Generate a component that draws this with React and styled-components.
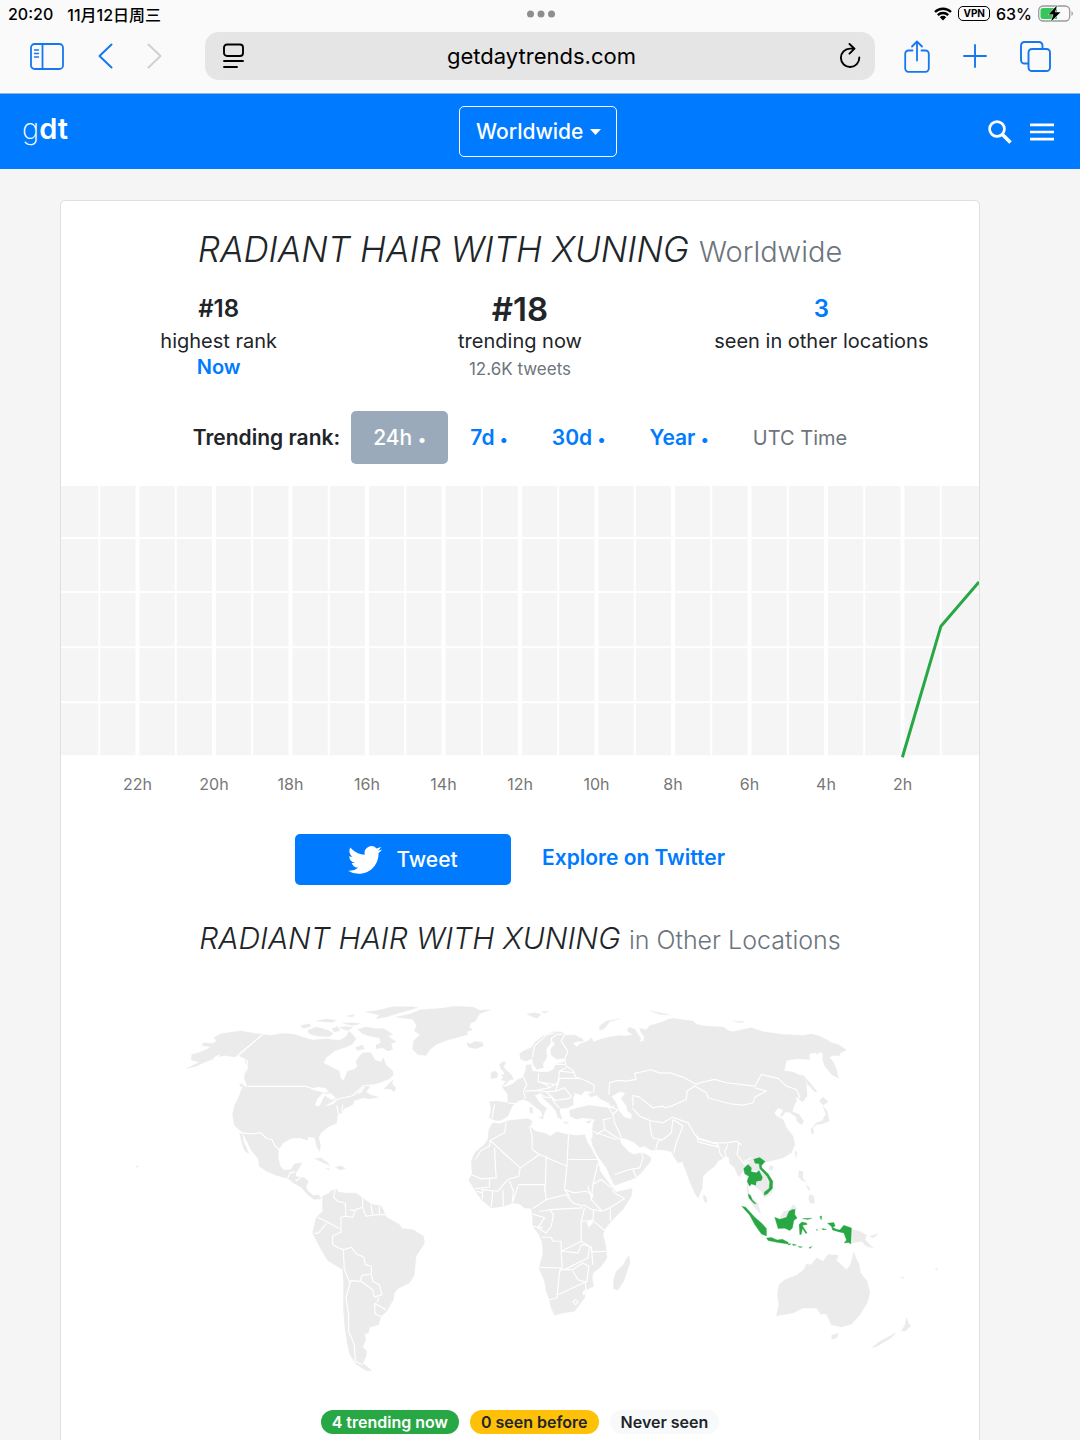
import React, { useState } from "react";
import styled, { createGlobalStyle } from "styled-components";

const Global = createGlobalStyle`
  *, *::before, *::after { box-sizing: border-box; }
  body {
    margin: 0;
    background: #f5f5f5;
    color: #212529;
    font-family: Inter, "Noto Sans CJK SC", sans-serif;
    font-size: 21px;
  }
  button, input, select { font: inherit; color: inherit; margin: 0; }
  h1, h2, p { margin: 0; font-weight: 400; }
  a { color: #007bff; text-decoration: none; }
`;

const Page = styled.div`
  height: 100vh;
  overflow: hidden;
  display: flex;
  flex-direction: column;
`;

/* ---------- Browser chrome ---------- */

const Chrome = styled.div`
  flex: none;
  background: #fafafa;
  border-bottom: 1px solid #8fb4dd;
  color: #000;
`;

const StatusBar = styled.div`
  display: grid;
  grid-template-columns: 1fr auto 1fr;
  align-items: center;
  height: 27px;
  padding: 0 6px 0 8px;
  font-size: 16px;
  font-weight: 500;
`;

const StatusSide = styled.div`
  display: flex;
  align-items: center;
  justify-content: ${(p) => (p.$end ? "flex-end" : "flex-start")};
  gap: ${(p) => (p.$end ? 6 : 14)}px;
`;

const Vpn = styled.span`
  border: 1px solid #000;
  border-radius: 5px;
  padding: 0 4px;
  font-size: 10px;
  line-height: 13px;
  font-weight: 700;
`;

const Toolbar = styled.div`
  display: grid;
  grid-template-columns: 175px 1fr 175px;
  align-items: center;
  gap: 15px;
  height: 66px;
  padding: 5px 15px 13px;
`;

const ToolGroup = styled.div`
  display: flex;
  align-items: center;
  justify-content: space-between;
  padding: ${(p) => (p.$end ? "0 14px" : "0 28px 0 15px")};
`;

const IconButton = styled.button`
  display: grid;
  place-items: center;
  padding: 0;
  border: 0;
  background: none;
  color: ${(p) => p.$color || "#1677f0"};
`;

const Address = styled.label`
  display: flex;
  align-items: center;
  height: 48px;
  padding: 0 14px 0 18px;
  border-radius: 14px;
  background: #e5e5e5;
`;

const AddressInput = styled.input`
  flex: 1;
  min-width: 0;
  border: 0;
  background: none;
  text-align: center;
  font-size: 22px;
  outline: none;
`;

/* ---------- Site header ---------- */

const SiteHeader = styled.header`
  flex: none;
  display: grid;
  grid-template-columns: 1fr auto 1fr;
  align-items: center;
  height: 75px;
  padding: 0 26px 0 22px;
  background: #007bff;
  color: #fff;
`;

const Logo = styled.a`
  color: #fff;
  font-size: 29px;
  line-height: 32px;
  font-weight: 600;
  padding-bottom: 6px;
`;

const LogoThin = styled.span`
  font-weight: 200;
`;

const Place = styled.label`
  display: grid;
  align-items: center;
  height: 51px;
  border: 1px solid #fff;
  border-radius: 5px;
  & > * { grid-area: 1 / 1; }
  & > svg { justify-self: end; margin-right: 15px; pointer-events: none; }
`;

const PlaceSelect = styled.select`
  appearance: none;
  height: 100%;
  border: 0;
  padding: 0 32px 0 16px;
  background: none;
  color: #fff;
  font-size: 21px;
  font-weight: 500;
`;

const HeaderTools = styled.div`
  display: flex;
  justify-content: flex-end;
  align-items: center;
  gap: 18px;
`;

/* ---------- Trend card ---------- */

const Main = styled.main`
  padding: 31px 100px 0 60px;
`;

const Card = styled.section`
  background: #fff;
  border: 1px solid #dfdfdf;
  border-radius: 5px;
  padding: 24px 0 40px;
`;

const Title = styled.h1`
  text-align: center;
  font-size: 35px;
  line-height: 48px;
  font-weight: 300;
`;

const SubTitle = styled.h2`
  text-align: center;
  font-size: 30px;
  line-height: 40px;
  font-weight: 300;
  margin-top: 33px;
`;

const Muted = styled.span`
  color: #6c757d;
  font-size: ${(p) => p.$size}px;
  font-weight: 300;
`;

const Stats = styled.div`
  display: grid;
  grid-template-columns: repeat(3, 1fr);
  padding: 15px 7px 0;
  text-align: center;
`;

const StatValue = styled.p`
  font-size: ${(p) => (p.$big ? 33 : 24)}px;
  line-height: 36px;
  font-weight: 600;
`;

const StatLabel = styled.p`
  font-size: 20px;
  line-height: 28px;
`;

const StatNote = styled.p`
  font-size: ${(p) => (p.$small ? 17 : 20)}px;
  line-height: ${(p) => (p.$small ? 28 : 24)}px;
  font-weight: ${(p) => (p.$small ? 400 : 600)};
  color: #6c757d;
`;

const RangeRow = styled.div`
  display: flex;
  justify-content: center;
  align-items: center;
  margin: 28px 0 22px;
  height: 53px;
`;

const RangeLabel = styled.span`
  font-weight: 600;
  margin-right: 11px;
`;

const RangeButton = styled.button`
  height: 53px;
  padding: 0 22px;
  border: 0;
  border-radius: 5px;
  font-weight: ${(p) => (p.$active ? 500 : 600)};
  background: ${(p) => (p.$active ? "#9aaaba" : "transparent")};
  color: ${(p) => (p.$active ? "#fff" : "#007bff")};
`;

const Dot = styled.span`
  font-size: 16px;
`;

const Zone = styled.span`
  padding-left: 22px;
  font-size: 20px;
  color: #6c757d;
`;

const Plot = styled.svg`
  display: block;
  width: 100%;
  height: auto;
`;

const Hours = styled.div`
  display: grid;
  grid-template-columns: repeat(24, 1fr);
  margin-top: 14px;
  font-size: 16px;
  line-height: 24px;
  color: #777;
  text-align: center;
`;

const Hour = styled.span`
  grid-column: ${(p) => p.$col} / span 2;
`;

const Actions = styled.div`
  display: flex;
  justify-content: center;
  margin-top: 38px;
`;

const TweetButton = styled.button`
  display: flex;
  align-items: center;
  justify-content: center;
  gap: 14px;
  width: 216px;
  height: 51px;
  border: 0;
  border-radius: 5px;
  background: #007bff;
  color: #fff;
  font-weight: 500;
`;

const ExploreLink = styled.a`
  padding: 0 20px 0 31px;
  line-height: 47px;
  font-weight: 600;
`;

const Legend = styled.div`
  display: flex;
  justify-content: center;
  gap: 11px;
  margin-top: 24px;
`;

const Badge = styled.span`
  padding: 0 11px;
  border-radius: 12px;
  font-size: 16px;
  line-height: 24px;
  font-weight: 600;
  background: ${(p) => p.$bg};
  color: ${(p) => p.$fg || "#212529"};
`;

/* ---------- Icons ---------- */

const line = { fill: "none", stroke: "currentColor", strokeLinecap: "round", strokeLinejoin: "round" };

const SidebarIcon = () => (
  <svg width="34" height="27" viewBox="0 0 34 27" {...line} strokeWidth="1.8">
    <rect x="1" y="1" width="32" height="25" rx="3.5" />
    <path d="M12.5 1v25" />
    <path d="M4.5 7h4M4.5 10.5h4M4.5 14h4" strokeWidth="1.3" />
  </svg>
);
const Chevron = ({ right }) => (
  <svg width="15" height="26" viewBox="0 0 15 26" {...line} strokeWidth="2">
    <path d={right ? "M1.5 1.5L13.5 13L1.5 24.5" : "M13.5 1.5L1.5 13L13.5 24.5"} />
  </svg>
);
const ReaderIcon = () => (
  <svg width="21" height="26" viewBox="0 0 21 26" {...line} strokeWidth="1.9">
    <rect x="1" y="1.5" width="19" height="11.5" rx="3" />
    <path d="M1 18h19M1 24h13" />
  </svg>
);
const ReloadIcon = () => (
  <svg width="22" height="26" viewBox="0 0 22 26" {...line} strokeWidth="1.9">
    <path d="M20.3 14.5A9.2 9.2 0 1 1 11 5.6L15 5.6M10.500 1L15.500 5.700L10.500 10.700" />
  </svg>
);
const ShareIcon = () => (
  <svg width="26" height="33" viewBox="0 0 26 33" {...line} strokeWidth="1.8">
    <path d="M8.5 10.5H4.5A3.3 3.3 0 0 0 1.2 13.8V28.5A3.3 3.3 0 0 0 4.5 31.8H21.5A3.3 3.3 0 0 0 24.8 28.5V13.8A3.3 3.3 0 0 0 21.5 10.5H17.5M13 20.5V1.5M8 6.5L13 1.5L18 6.5" />
  </svg>
);
const PlusIcon = () => (
  <svg width="24" height="24" viewBox="0 0 24 24" {...line} strokeWidth="1.9">
    <path d="M12 1v22M1 12h22" />
  </svg>
);
const TabsIcon = () => (
  <svg width="31" height="31" viewBox="0 0 31 31" {...line} strokeWidth="1.9">
    <rect x="8.5" y="8" width="21.5" height="22" rx="3.5" />
    <path d="M8 22.5H4.5A3.5 3.5 0 0 1 1 19V4.5A3.5 3.5 0 0 1 4.5 1H19A3.5 3.5 0 0 1 22.5 4.5V7.5" />
  </svg>
);
const DotsIcon = () => (
  <svg width="28" height="8" viewBox="0 0 28 8" fill="#8e8e8e">
    <circle cx="3.5" cy="4" r="3.5" /><circle cx="14" cy="4" r="3.5" /><circle cx="24.5" cy="4" r="3.5" />
  </svg>
);
const WifiIcon = () => (
  <svg width="18" height="14" viewBox="0 0 18 14" {...line} strokeWidth="2.4" strokeLinecap="butt">
    <path d="M1 5A11.3 11.3 0 0 1 17 5M3.8 8.1A7.4 7.4 0 0 1 14.2 8.1" />
    <path d="M9 13.5L5.8 10.2A4.5 4.5 0 0 1 12.2 10.2Z" fill="currentColor" stroke="none" />
  </svg>
);
const BatteryIcon = () => (
  <svg width="36" height="17" viewBox="0 0 36 17">
    <rect x="0.7" y="1" width="31" height="15" rx="4.5" fill="none" stroke="#9a9a9a" strokeWidth="1.3" />
    <path d="M5 3H19V14H5A2.5 2.5 0 0 1 2.5 11.5V5.5A2.5 2.5 0 0 1 5 3Z" fill="#35c759" />
    <path d="M33.5 6V11A3 3 0 0 0 33.5 6Z" fill="#9a9a9a" />
    <path d="M19 0.5L10.5 9.5H15.5L13 16.5L22.5 7.2H17Z" fill="#000" stroke="#fafafa" strokeWidth="1" paintOrder="stroke" />
  </svg>
);
const SearchIcon = () => (
  <svg width="24" height="24" viewBox="0 0 24 24" fill="none" stroke="currentColor">
    <circle cx="9" cy="9" r="7.4" strokeWidth="2.7" />
    <path d="M14.2 14.2L22.5 22.5" strokeWidth="3.6" />
  </svg>
);
const MenuIcon = () => (
  <svg width="24" height="18" viewBox="0 0 24 18" stroke="currentColor" strokeWidth="2.7">
    <path d="M0 1.8H24M0 9H24M0 16.2H24" />
  </svg>
);
const Caret = () => (
  <svg width="11" height="6" viewBox="0 0 11 6" fill="#fff"><path d="M0 0H11L5.5 6Z" /></svg>
);
const Bird = () => (
  <svg width="34" height="34" viewBox="0 0 24 24" fill="currentColor">
    <path d="M23.953 4.570a10 10 0 0 1-2.825.775 4.958 4.958 0 0 0 2.163-2.723c-.951.555-2.005.959-3.127 1.184a4.920 4.920 0 0 0-8.384 4.482C7.690 8.095 4.067 6.130 1.640 3.162a4.822 4.822 0 0 0-.666 2.475c0 1.710.870 3.213 2.188 4.096a4.904 4.904 0 0 1-2.228-.616v.060a4.923 4.923 0 0 0 3.946 4.827 4.996 4.996 0 0 1-2.212.085 4.936 4.936 0 0 0 4.604 3.417 9.867 9.867 0 0 1-6.102 2.105c-.390 0-.779-.023-1.170-.067a13.995 13.995 0 0 0 7.557 2.209c9.053 0 13.998-7.496 13.998-13.985 0-.210 0-.420-.015-.630A9.935 9.935 0 0 0 24 4.590z" />
  </svg>
);

/* ---------- Rank chart ---------- */

const step = 917 / 24;

const RankChart = () => (
  <Plot viewBox="0 0 917 272" role="img" aria-label="Trending rank, last 24 hours">
    <rect width="917" height="269" fill="#f5f5f5" />
    {Array.from({ length: 23 }, (_, i) => (
      <path key={i} d={`M${(i + 1) * step} 0V269`} stroke="#fff" strokeWidth={i % 2 ? 4 : 2} />
    ))}
    {[52, 106, 161, 216].map((y) => (
      <path key={y} d={`M0 ${y}H917`} stroke="#fff" strokeWidth="2" />
    ))}
    <path d="M840.5 271L879 140L917 96" fill="none" stroke="#28a745" strokeWidth="3" />
  </Plot>
);

/* ---------- World map ---------- */

const Land = styled.g`
  fill: #ebebeb;
  stroke: #ebebeb;
  stroke-width: 1;
  stroke-linejoin: round;
`;
const Borders = styled.path`
  fill: none;
  stroke: #fff;
  stroke-width: 3.5;
`;
const Water = styled.path`
  fill: #fff;
  stroke: #fff;
`;
const Active = styled.path`
  fill: #28a745;
  stroke: #28a745;
`;

const NorthAmerica = () => (
  <Land transform="translate(118 6) scale(.33333)">
    <path d="M22 232L45 221L60 213L36 207L38 190L62 184L84 174L95 167L68 163L74 155L100 157L112 150L104 140L125 128L160 123L185 120L215 125L250 130L175 193L165 198L140 193L118 196L128 188L110 194L100 205L80 212L50 226Z" />
    <path d="M253 130L275 133L300 128L325 127L350 131L375 140L400 147L440 143L480 148L500 137L510 120L520 130L530 142L520 158L500 168L465 180L440 200L433 216L455 228L480 240L484 262L493 268L505 240L525 235L535 225L530 212L537 200L550 185L575 185L586 206L605 213L612 200L620 222L640 240L642 250L632 262L600 275L575 282L552 287L530 310L545 305L560 285L572 288L560 303L575 312L597 318L570 324L555 320L525 328L520 341L495 352L488 365L475 370L472 396L450 405L425 425L418 440L424 465L420 480L412 465L407 440L385 437L385 447L360 440L335 442L312 455L298 475L297 500L303 525L315 537L335 535L345 518L368 515L360 530L350 545L350 556L375 560L388 570L380 585L385 598L400 612L418 612L427 622L405 625L385 610L368 590L345 575L325 562L290 552L262 540L240 525L237 503L215 475L200 445L190 425L165 402L160 370L165 345L180 315L188 292L205 287L195 262L198 240L208 232L195 205L178 195Z" />
    <path d="M181 424L190 430L193 450L205 478L208 488L196 478L188 455Z" />
    <path d="M650 78L690 70L722 56L790 52L820 46L880 48L900 58L932 56L900 68L888 90L875 95L868 108L880 116L862 122L865 130L830 140L800 148L770 160L750 177L740 193L715 190L700 175L702 150L722 130L705 120L712 104L700 85Z" />
    <path d="M863 155L875 159L885 152L908 154L910 164L890 172L868 168Z" />
    <path d="M560 63L600 57L640 47L700 47L715 50L680 60L655 67L620 78L590 83L600 72Z" />
    <path d="M365 103L390 98L395 106L370 112ZM385 118L410 108L430 112L450 120L462 127L450 137L415 135L390 128ZM412 90L440 84L470 88L460 94L430 92ZM458 113L475 106L482 118L465 123ZM490 97L520 95L545 98L520 103ZM502 75L525 70L520 78ZM480 110L500 106L520 109L505 118Z" />
    <path d="M535 115L560 108L590 113L612 112L628 122L640 130L625 135L650 152L635 158L640 175L625 180L610 170L590 173L590 162L605 155L600 140L570 135L550 128ZM528 170L550 162L555 174L535 178Z" />
    <path d="M613 293L632 275L642 266L638 278L650 290L645 302L632 294ZM185 277L200 288L195 292L180 282Z" />
    <path d="M408 503L425 500L445 514L450 522L430 514ZM468 528L485 524L498 532L484 537ZM440 532L452 533L448 536Z" />
    <Borders d="M205 286H380L400 292L430 300L445 318L470 325L520 314L552 284L580 281M250 130L175 194L205 210L200 245M180 424L215 428L245 425L262 442L278 445L288 465L300 475M325 562L332 545L347 543M349 570L365 558M472 343L478 368M490 340L488 362" />
    <Water d="M395 294L415 288L440 292L448 304L425 302ZM408 342L415 322L430 307L437 312L428 328L420 345ZM436 310L455 307L468 320L456 326L448 319ZM438 345L460 331L474 327L462 338Z" />
  </Land>
);

const SouthAmerica = () => (
  <Land transform="translate(118 196) scale(.33333)">
    <path d="M430 45L450 35L455 28L475 24L475 32L500 35L532 36L550 50L575 68L605 74L612 86L622 108L660 130L668 142L700 145L733 165L735 187L710 225L705 280L690 305L655 322L645 335L642 355L622 390L605 405L598 430L570 438L568 455L555 458L560 475L550 495L562 510L560 525L550 545L578 568L560 567L530 548L512 520L505 490L497 440L492 380L493 310L490 265L445 238L420 195L400 155L410 110L430 90Z" />
    <path d="M335 0L352 6L370 2L384 4L372 14L388 32L404 47L420 42L405 52L384 38L364 16L350 10Z" />
    <Borders d="M467 27L463 48L475 60L498 66L500 105L485 108L485 152L460 165L460 190L478 200L494 205L516 198L530 217L553 227L558 250L576 255L576 278L548 282L543 300L515 298L510 310M415 108L440 120L480 142M405 157L418 155L440 128L445 120M492 206L495 265L512 305L500 350L508 400L508 450L525 490L528 540L550 550M576 278L580 300L600 310L608 340L585 347L580 325L545 300M586 365L620 386M586 365L587 398L604 405M598 347L594 362M500 105L520 108L528 85L550 78L550 50M550 78L560 105L580 102L575 70M600 75L600 100L580 102M600 100L620 100M512 85L528 88" />
  </Land>
);

const Eurasia = () => (
  <Land transform="translate(388 6) scale(.33333)">
    <path d="M210 188L222 180L245 170L255 155L280 135L310 123L335 122L350 133L375 132L398 143L402 150L378 152L370 158L382 167L392 158L415 150L425 140L432 152L450 145L480 138L510 133L530 135L550 132L532 118L540 108L556 115L566 130L574 142L570 152L582 150L584 138L575 125L570 112L590 115L600 104L640 92L655 85L670 82L700 86L730 90L740 100L760 104L790 106L820 108L835 118L850 122L880 115L905 110L940 122L1000 130L1060 133L1085 129L1105 134L1130 145L1145 155L1165 160L1190 177L1172 185L1170 193L1150 193L1138 198L1150 212L1160 235L1166 262L1145 250L1125 225L1118 205L1120 188L1110 182L1102 190L1098 184L1078 188L1080 205L1040 203L1010 208L1003 240L1018 241L1030 243L1045 250L1060 255L1070 280L1072 315L1058 333L1046 322L1040 330L1032 345L1028 362L1048 370L1062 390L1055 400L1042 392L1040 378L1022 365L1008 362L1000 372L990 378L1000 357L985 350L974 364L980 375L1000 385L1010 410L1030 435L1035 460L1025 485L1000 500L960 510L940 514L935 540L955 560L968 580L966 605L945 620L935 600L915 585L903 568L895 585L898 612L925 638L933 668L920 655L898 625L890 590L884 555L865 555L855 530L840 518L838 500L830 495L805 510L795 525L775 540L760 555L758 590L745 620L735 605L720 570L705 530L698 512L685 515L672 495L665 482L650 478L620 475L605 478L585 465L570 468L555 455L535 445L510 438L515 458L535 480L552 490L575 485L590 490L605 500L600 515L575 545L558 560L530 570L495 583L488 570L470 530L445 495L430 465L425 445L430 435L428 415L432 392L438 385L400 380L380 384L362 375L360 358L385 350L420 342L460 348L485 350L478 335L455 325L440 312L425 318L415 310L432 302L405 300L395 312L375 305L370 325L372 340L355 350L332 352L330 362L338 385L325 378L318 358L300 338L285 325L272 308L255 312L270 335L292 352L286 362L280 378L276 362L255 345L235 330L220 325L205 330L188 345L175 375L155 388L138 388L120 380L125 350L120 332L140 330L175 335L175 310L158 288L175 285L190 278L205 265L220 260L228 240L230 222L245 220L248 240L270 243L295 243L312 235L318 220L345 212L348 202L320 204L305 192L303 175L318 155L305 152L290 175L292 200L280 218L282 230L262 235L252 222L248 202L232 210L214 205Z" />
    <path d="M158 286L170 278L180 267L192 265L186 252L176 242L168 235L162 226L170 214L160 211L150 220L154 234L162 240L165 250L156 252L162 260L153 266L170 270ZM125 262L124 246L136 240L146 248L142 260Z" />
    <path d="M52 155L64 160L75 152L98 154L102 164L80 172L58 168ZM232 68L255 65L275 70L262 82L245 76ZM275 62L298 60L285 67ZM450 105L470 90L510 83L480 92L465 112L450 118ZM600 59L635 66L662 72L630 70ZM850 90L885 92L870 95Z" />
    <path d="M233 228L240 226L242 238L236 240ZM240 350L248 348L250 366L242 364ZM268 378L282 376L280 384ZM340 392L358 394L350 398ZM408 392L425 388L418 397Z" />
    <path d="M1058 250L1080 275L1102 302L1095 302L1070 275ZM1108 330L1120 318L1135 332L1120 342ZM1120 345L1132 360L1138 390L1118 398L1100 400L1088 412L1098 396L1118 388L1128 370ZM1084 410L1092 415L1090 430L1084 425ZM1038 478L1042 484L1039 500L1036 488ZM960 524L972 526L966 538L958 534Z" />
    <path d="M762 610L770 618L772 632L766 634L761 622ZM1048 538L1060 542L1058 560L1068 572L1056 568L1046 556ZM1068 580L1080 590L1078 600ZM1080 610L1092 614L1094 636L1082 636L1076 622Z" />
    <path d="M1003 660L1018 658L1030 640L1042 652L1032 660L1012 674L990 680Z" />
    <Water d="M487 316L510 303L526 306L514 322L530 345L532 358L545 370L545 383L525 378L510 360L500 335Z" />
    <Borders d="M345 130L335 150L355 180L345 205L350 225L372 240L378 258L408 268L434 282L432 305M315 125L290 132L255 165L248 200M338 130L322 130L305 142L308 158M478 310L480 275L505 268L530 270L560 265L555 247L605 236L630 246L660 245L700 258L740 280L750 275L795 265L830 275L915 285L935 250L985 262L1010 285L1040 295L1050 318L1038 325M735 285L770 305L775 320L840 338L880 342L910 335L915 318L950 300L915 290M735 285L712 300L710 325L665 345L645 350L640 345L610 350L570 318L550 313L550 345M548 350L570 375L600 388L640 395L668 378L715 395L735 430L745 440L790 455L830 455L860 450L875 460M600 390L605 430L612 442L640 445L665 425L670 385M618 475L625 450L640 445M670 385L700 405L690 430L680 455L672 485M742 435L750 445L800 458L806 468L745 452ZM806 462L810 485L822 500M835 460L825 480L830 500M868 455L862 490L885 520L900 510M905 500L885 510L905 540L935 542M485 350L505 355L490 370L478 350L495 345M490 370L495 395L515 438M462 390L465 415L440 430M465 415L510 445M430 420L440 425L500 445M458 387L485 380M495 550L540 535L570 530L580 500L575 485M550 535L560 558" />
    <Borders d="M222 300L232 282L222 258M228 300L260 298L300 290L290 280L265 272L268 245M300 290L325 275L330 240L350 230M265 272L325 282L330 262L390 262M325 278L318 300L290 302L260 298M330 240L375 245M318 300L345 290L365 315L360 322L318 328L290 302M175 335L200 338M135 340L128 380M300 310L315 335L330 350M270 305L285 318L310 320M222 300L228 325M312 220L345 220" strokeWidth="2" />
  </Land>
);

const Africa = () => (
  <Land transform="translate(388 126) scale(.33333)">
    <path d="M130 35L150 38L180 28L235 22L248 30L242 47L258 60L290 68L302 75L322 62L355 70L385 73L405 70L412 90L430 120L445 150L452 180L470 205L490 232L500 242L548 232L545 255L520 295L490 325L468 350L460 370L468 400L472 440L455 465L430 485L428 500L432 525L410 535L405 560L375 600L340 605L315 612L305 590L298 560L290 540L285 510L268 470L280 430L278 395L268 370L250 345L248 305L245 292L225 290L210 278L190 275L165 285L125 290L95 265L75 235L58 207L68 185L65 150L78 122L105 100L115 85L118 55Z" />
    <path d="M537 432L542 452L522 510L505 537L492 532L492 505L500 480L520 462Z" />
    <Borders d="M170 35L165 65L122 88L120 105L95 118L78 145M122 88L212 170L270 130L248 115L248 75L240 45M135 110L140 200L95 203L65 190M212 170L208 195L175 205L145 240L95 235M270 130L352 165L357 70M290 135L288 210L285 240M352 165L345 235L360 255M357 145H445M205 220H285L290 265L250 292M180 210L192 240L188 275M160 235L162 285M130 240L125 288M100 235L98 265M75 232L120 228L120 202M80 240L100 245M190 270L205 225M290 265L350 250L370 275L400 285M345 235L372 245L410 240L430 250L425 265L458 300L480 290L525 262L495 245L488 235M445 155L430 220L425 265M430 220L455 205L485 230M415 225L425 260M400 290L300 295L312 310L305 345L290 365L265 350L285 320L250 308M250 345L280 350M312 295L270 300M405 290L395 330L395 390L335 420L338 470L270 468M275 378L305 378L310 390L335 390L335 420L385 425L395 400L420 405L415 440L345 475M395 330L430 328L468 360M430 328L432 295L458 300M395 390L420 405L430 422L472 420M425 405L430 460M338 470L330 480L322 560L300 565M330 475L370 475L400 455L418 465L412 510L325 550M370 480L385 505L408 512L408 540L400 550M482 290L482 330M400 280L432 298" />
    <Water d="M412 335L425 325L430 335L418 348ZM368 572L378 563L388 572L378 582ZM400 540L407 538L408 550L400 550Z" />
    <path d="M373 572L378 568L383 572L378 577Z" />
  </Land>
);

const Oceania = () => (
  <Land transform="translate(598 146) scale(.33333)">
    <path d="M358 460L375 445L410 432L432 415L440 398L455 400L470 380L490 390L505 370L535 372L530 388L560 415L572 400L582 362L590 385L598 400L602 425L622 450L630 485L622 515L600 550L575 578L545 587L515 580L500 548L482 548L470 530L430 530L400 545L350 553L357 520L353 490Z" />
    <path d="M515 612L536 606L530 620L516 624Z" />
    <path d="M740 558L745 575L752 583L738 598L724 600L735 582ZM708 605L690 622L650 645L637 648L660 630Z" />
    <path d="M577 295L600 300L620 312L615 325L640 350L620 345L605 330L577 335ZM630 315L655 307L640 320ZM722 435L734 440L730 443ZM825 412L833 412L830 417ZM-1570 104L-1562 106L-1567 109Z" />
    <Water d="M242 132L252 120L262 140L260 200L252 160Z" />
    <Active d="M252 112L265 100L275 110L274 122L290 125L298 118L308 138L305 148L290 150L288 162L275 158L270 165L262 150L268 135L255 128Z" />
    <path d="M290 155L305 150L322 152L320 172L308 182L296 172Z" />
    <Active d="M282 84L300 79L316 91L305 103L306 110L325 128L339 150L338 172L322 188L313 192L314 182L328 172L330 152L322 136L300 112L298 98L286 96Z" />
    <Active d="M265 188L272 192L278 206L290 218L282 216L268 200Z" />
    <Active d="M246 225L258 228L285 258L305 275L320 292L320 314L305 308L285 280L270 252Z" />
    <Active d="M320 320L335 319L352 326L368 324L385 333L385 338L355 334L325 328ZM398 338L410 341L400 343ZM415 345L428 347L420 349ZM447 350L456 345L452 351ZM384 337L394 338L386 341Z" />
    <Active d="M345 258L360 264L380 258L388 240L398 235L406 235L405 250L412 260L402 268L398 290L390 298L375 291L355 292Z" />
    <Active d="M418 280L426 272L440 275L442 280L428 282L432 290L442 305L438 307L428 292L424 310L420 310ZM428 262L456 261L444 265ZM480 256L486 254L484 266ZM486 292L500 294L490 296ZM470 294L474 296L471 298Z" />
    <Active d="M503 276L522 274L526 284L518 288L530 294L540 296L552 282L575 290L573 338L566 334L553 335L560 326L552 305L538 302L518 296L515 286Z" />
  </Land>
);

const WorldMap = styled.svg`
  display: block;
  width: 100%;
  height: auto;
  margin-top: 25px;
`;

const ranges = ["24h", "7d", "30d", "Year"];
const hours = ["22h", "20h", "18h", "16h", "14h", "12h", "10h", "8h", "6h", "4h", "2h"];

export default function App() {
  const [range, setRange] = useState("24h");
  return (
    <Page>
      <Global />
      <Chrome>
        <StatusBar>
          <StatusSide><span>20:20</span><span>11月12日周三</span></StatusSide>
          <DotsIcon />
          <StatusSide $end><WifiIcon /><Vpn>VPN</Vpn><span>63%</span><BatteryIcon /></StatusSide>
        </StatusBar>
        <Toolbar>
          <ToolGroup>
            <IconButton aria-label="Sidebar"><SidebarIcon /></IconButton>
            <IconButton aria-label="Back"><Chevron /></IconButton>
            <IconButton aria-label="Forward" $color="#d0d0d0"><Chevron right /></IconButton>
          </ToolGroup>
          <Address>
            <ReaderIcon />
            <AddressInput aria-label="Address" defaultValue="getdaytrends.com" />
            <IconButton aria-label="Reload" $color="#000"><ReloadIcon /></IconButton>
          </Address>
          <ToolGroup $end>
            <IconButton aria-label="Share"><ShareIcon /></IconButton>
            <IconButton aria-label="New tab"><PlusIcon /></IconButton>
            <IconButton aria-label="Tabs"><TabsIcon /></IconButton>
          </ToolGroup>
        </Toolbar>
      </Chrome>

      <SiteHeader>
        <Logo href="#"><LogoThin>g</LogoThin>dt</Logo>
        <Place>
          <PlaceSelect aria-label="Location"><option>Worldwide</option></PlaceSelect>
          <Caret />
        </Place>
        <HeaderTools>
          <IconButton aria-label="Search" $color="#fff"><SearchIcon /></IconButton>
          <IconButton aria-label="Menu" $color="#fff"><MenuIcon /></IconButton>
        </HeaderTools>
      </SiteHeader>

      <Main>
        <Card>
          <Title><em>RADIANT HAIR WITH XUNING</em> <Muted $size={29}>Worldwide</Muted></Title>
          <Stats>
            <div>
              <StatValue>#18</StatValue>
              <StatLabel>highest rank</StatLabel>
              <StatNote><a href="#now">Now</a></StatNote>
            </div>
            <div>
              <StatValue $big>#18</StatValue>
              <StatLabel>trending now</StatLabel>
              <StatNote $small>12.6K tweets</StatNote>
            </div>
            <div>
              <StatValue><a href="#locations">3</a></StatValue>
              <StatLabel>seen in other locations</StatLabel>
            </div>
          </Stats>
          <RangeRow>
            <RangeLabel>Trending rank:</RangeLabel>
            {ranges.map((r) => (
              <RangeButton key={r} $active={r === range} onClick={() => setRange(r)}>{r} <Dot>•</Dot></RangeButton>
            ))}
            <Zone>UTC Time</Zone>
          </RangeRow>
          <RankChart />
          <Hours>
            {hours.map((h, i) => <Hour key={h} $col={2 + i * 2}>{h}</Hour>)}
          </Hours>
          <Actions>
            <TweetButton><Bird />Tweet</TweetButton>
            <ExploreLink href="#explore">Explore on Twitter</ExploreLink>
          </Actions>
          <SubTitle id="locations"><em>RADIANT HAIR WITH XUNING</em> <Muted $size={25}>in Other Locations</Muted></SubTitle>
          <WorldMap viewBox="0 0 917 400" role="img" aria-label="World map of locations">
            <NorthAmerica />
            <SouthAmerica />
            <Africa />
            <Eurasia />
            <Oceania />
          </WorldMap>
          <Legend>
            <Badge $bg="#28a745" $fg="#fff">4 trending now</Badge>
            <Badge $bg="#ffc107">0 seen before</Badge>
            <Badge $bg="#f8f9fa">Never seen</Badge>
          </Legend>
        </Card>
      </Main>
    </Page>
  );
}
